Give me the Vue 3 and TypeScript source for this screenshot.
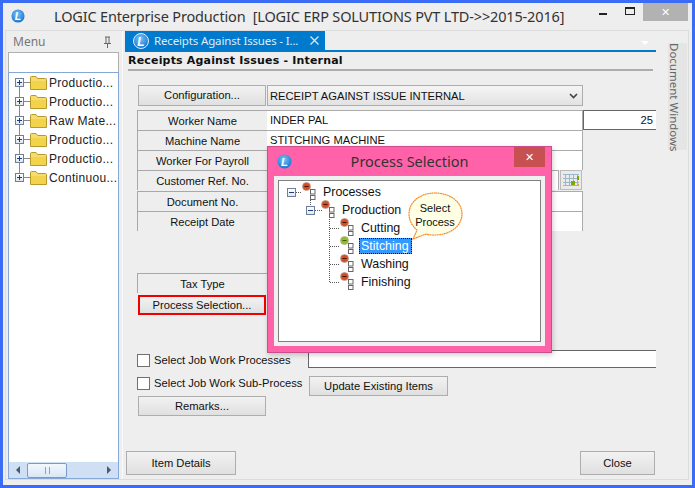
<script setup lang="ts">
const menuItems: string[] = ['Productio...', 'Productio...', 'Raw  Mate...', 'Productio...', 'Productio...', 'Continuou...']
const formRows = [
  { label: 'Worker Name', value: 'INDER PAL', extra: '25', cls: '' },
  { label: 'Machine Name', value: 'STITCHING MACHINE', extra: '', cls: '' },
  { label: 'Worker For Payroll', value: '', extra: '', cls: '' },
  { label: 'Customer Ref. No.', value: '', extra: '', cls: 'has-cal' },
  { label: 'Document No.', value: '', extra: '', cls: 'shift' },
  { label: 'Receipt Date', value: '', extra: '', cls: '' },
]
const processes = [
  { name: 'Processes', depth: 0, active: false, selected: false, toggle: true },
  { name: 'Production', depth: 1, active: false, selected: false, toggle: true },
  { name: 'Cutting', depth: 2, active: false, selected: false, toggle: false },
  { name: 'Stitching', depth: 2, active: true, selected: true, toggle: false },
  { name: 'Washing', depth: 2, active: false, selected: false, toggle: false },
  { name: 'Finishing', depth: 2, active: false, selected: false, toggle: false },
]
</script>

<template>
  <div class="window">
    <header class="titlebar">
      <svg class="logo" width="14" height="14" viewBox="0 0 16 16">
        <defs>
          <radialGradient id="ball" cx="45%" cy="35%" r="70%">
            <stop offset="0" stop-color="#7cc4f5" />
            <stop offset="1" stop-color="#0f6fd0" />
          </radialGradient>
        </defs>
        <circle cx="8" cy="8" r="7.500" fill="url(#ball)" />
        <text x="8" y="12.500" text-anchor="middle" class="logo-l">L</text>
      </svg>
      <span class="app-title">LOGIC Enterprise Production&nbsp;&nbsp;[LOGIC ERP SOLUTIONS PVT LTD-&gt;&gt;2015-2016]</span>
      <div class="win-btns">
        <span class="min"></span>
        <span class="max"></span>
        <span class="cls">✕</span>
      </div>
    </header>

    <div class="frame">
      <aside class="sidebar">
        <div class="menu-head">
          <span class="menu-title">Menu</span>
          <span class="gripper"></span>
          <svg class="pin" width="9" height="12" viewBox="0 0 9 12">
            <path d="M2 1h5M3 1v6M6 1v6M1 7.500h7M4.500 7.500V12" stroke="#666" fill="none" />
          </svg>
        </div>
        <div class="search"></div>
        <div class="tree-box">
          <ul class="menu-tree">
            <li v-for="(item, i) in menuItems" :key="i" class="menu-row">
              <span class="exp plus"></span>
              <svg width="17" height="14" viewBox="0 0 17 14" class="folder">
                <path d="M0.500 3V1.500Q0.500 0.500 1.500 0.500H6L7.500 2.500H15.500Q16.500 2.500 16.500 3.500V13.500H0.500Z" fill="#f6dc6c" stroke="#b89a2c" />
                <path d="M1 5H16V13H1Z" fill="#f3d24c" />
              </svg>
              <span class="menu-text">{{ item }}</span>
            </li>
          </ul>
          <div class="hscroll">
            <span class="arrow left"></span>
            <span class="thumb"><i></i></span>
            <span class="arrow right"></span>
          </div>
        </div>
      </aside>

      <div class="splitter"></div>

      <main class="main">
        <div class="tabstrip">
          <div class="tab">
            <svg width="16" height="16" viewBox="0 0 16 16">
              <circle cx="8" cy="8" r="7.500" fill="url(#ball)" stroke="#dceeff" />
              <text x="8" y="12.500" text-anchor="middle" class="logo-l">L</text>
            </svg>
            <span class="tab-text">Receipts Against Issues - I...</span>
            <svg class="tab-x" width="9" height="9" viewBox="0 0 9 9">
              <path d="M0.500 0.500L8.500 8.500M8.500 0.500L0.500 8.500" stroke="#d5e8f7" stroke-width="1.300" />
            </svg>
          </div>
          <span class="tab-menu"></span>
        </div>

        <h1 class="heading">Receipts Against Issues - Internal</h1>
        <div class="rule"></div>

        <section class="form">
          <div class="config-row">
            <button class="btn config-btn">Configuration...</button>
            <div class="select">
              <span>RECEIPT AGAINST ISSUE INTERNAL</span>
              <svg width="9" height="6" viewBox="0 0 9 6"><path d="M1 1l3.500 3.500L8 1" stroke="#444" stroke-width="1.600" fill="none" /></svg>
            </div>
          </div>

          <div v-for="row in formRows" :key="row.label" class="row" :class="row.cls">
            <div class="lbl">{{ row.label }}</div>
            <div class="field-wrap">
              <div class="field">{{ row.value }}</div>
              <svg v-if="row.cls === 'has-cal'" class="cal" width="22" height="20" viewBox="0 0 22 20">
                <rect x="0.500" y="0.500" width="21" height="19" fill="#eaeaea" stroke="#bbb" />
                <path d="M3 4.500H19M3 8.500H19M3 12.500H19M3 15.500H19M5.500 4V16M9.500 4V16M13.500 4V16M17.500 4V16" stroke="#9db7c9" fill="none" />
                <rect x="11" y="11" width="4" height="4" fill="#7fa800" />
                <rect x="17" y="6" width="2" height="4" fill="#7fa800" />
                <rect x="17" y="14" width="2" height="2" fill="#e8a33a" />
              </svg>
            </div>
            <div v-if="row.extra" class="extra">{{ row.extra }}</div>
          </div>

          <div class="lbl tax">Tax Type</div>
          <button class="btn process-btn">Process Selection...</button>

          <div class="check-row first">
            <label class="check"><span class="box"></span>Select Job Work Processes</label>
            <div class="job-input"></div>
          </div>
          <div class="check-row second">
            <label class="check"><span class="box"></span>Select Job Work Sub-Process</label>
            <button class="btn update-btn">Update Existing Items</button>
          </div>
          <button class="btn remarks-btn">Remarks...</button>
        </section>

        <footer class="footer">
          <button class="btn foot-btn item">Item Details</button>
          <button class="btn foot-btn close">Close</button>
        </footer>

        <div class="modal">
          <div class="modal-head">
            <svg class="modal-logo" width="15" height="15" viewBox="0 0 16 16">
              <circle cx="8" cy="8" r="7.500" fill="url(#ball)" />
              <text x="8" y="12.500" text-anchor="middle" class="logo-l">L</text>
            </svg>
            <span class="modal-title">Process Selection</span>
            <span class="modal-close">✕</span>
          </div>
          <div class="modal-body">
            <div class="proc-panel">
              <svg class="connectors" width="120" height="120" viewBox="0 0 120 120">
                <g stroke="#555" stroke-dasharray="1 1" fill="none">
                  <path d="M17 11.500H23M31.500 19V25M36 29.500H43" />
                  <path d="M50.500 32V101.500M51 47.500H61M51 65.500H61M51 83.500H61M51 101.500H61" />
                </g>
              </svg>
              <ul class="proc-tree">
                <li v-for="p in processes" :key="p.name" class="proc-row" :class="'d' + p.depth">
                  <span v-if="p.toggle" class="exp minus"></span>
                  <svg class="node" width="15" height="18" viewBox="0 0 15 18">
                    <circle cx="4.500" cy="4.500" r="4" :fill="p.active ? '#8fbf2a' : '#cf4f26'" stroke="#b9a59c" stroke-width="0.700" />
                    <path d="M2.500 4.500H6.500" :stroke="p.active ? '#3c5a00' : '#4a1000'" />
                    <rect x="8.500" y="7.500" width="4.500" height="4.500" fill="#fff" stroke="#666" />
                    <rect x="8.500" y="13.500" width="4.500" height="4" fill="#fff" stroke="#666" />
                  </svg>
                  <span class="proc-name" :class="{ sel: p.selected }">{{ p.name }}</span>
                </li>
              </ul>
              <div class="bubble">
                <svg width="60" height="52" viewBox="0 0 60 52">
                  <path d="M27 1C42 1 54 10 54 22C54 34 42 43 27 43C24 43 21 43 18 42L5 47L9 38C4 34 1 28 1 22C1 10 12 1 27 1Z" fill="#ffffe6" stroke="#f5831f" stroke-width="1.100" stroke-dasharray="2 0.400" />
                </svg>
                <span class="bubble-text">Select<br />Process</span>
              </div>
            </div>
          </div>
        </div>
      </main>

      <aside class="dock">
        <div class="dock-tab"><span>Document Windows</span></div>
      </aside>
    </div>
  </div>
</template>

<style>
html, body { margin: 0; padding: 0; background: #eee; }
</style>

<style scoped>
.window {
  width: 695px; height: 488px; box-sizing: border-box;
  border: 3px solid #3b6cf5; background: #eee;
  display: flex; flex-direction: column; overflow: hidden;
  font-family: "Liberation Sans", Arial, sans-serif; font-size: 11.200px; color: #111;
}
.titlebar { height: 27px; display: flex; align-items: flex-start; flex: none; position: relative; }
.logo { margin: 6px 0 0 8px; flex: none; }
.logo-l { font: italic bold 12px "Liberation Sans", sans-serif; fill: #fff; }
.app-title {
  margin: 1px 0 0 29px; font-family: "Noto Sans", sans-serif; font-size: 14.500px; line-height: 24px;
  color: #333; white-space: pre; letter-spacing: -0.160px;
}
.win-btns { position: absolute; right: 4px; top: 0; display: flex; align-items: flex-start; }
.min { width: 8px; height: 2px; background: #222; margin: 10px 0 0 0; }
.max { width: 10px; height: 8px; box-sizing: border-box; border: 1px solid #222; border-top-width: 2px; margin: 4px 0 0 18px; }
.cls {
  width: 45px; height: 18px; background: #b2b2b2; color: #fff; margin-left: 8px;
  display: flex; align-items: center; justify-content: center; font-size: 11px; font-weight: bold; font-family: "DejaVu Sans", sans-serif;
}
.frame {
  flex: 1; min-height: 0; margin: 0 3px 5px 2px; border: 1px solid #dcdcdc;
  display: flex; background: #eee;
}
.sidebar { width: 111px; margin-left: 2px; display: flex; flex-direction: column; flex: none; }
.menu-head { height: 21px; display: flex; align-items: center; box-sizing: border-box; padding: 0 7px 0 5px; flex: none; }
.menu-title { color: #777; font-family: "Noto Sans", sans-serif; font-size: 12px; }
.gripper {
  width: 34px; height: 5px; margin-left: 3px; flex: none;
  background-image: radial-gradient(#b5b5b5 0.600px, transparent 0.700px); background-size: 2px 2px;
}
.pin { margin-left: auto; }
.search { height: 19px; flex: none; background: #fff; border: 1px solid #b0b0b0; border-bottom: 0; box-sizing: content-box; width: 109px; }
.tree-box {
  flex: 1; min-height: 0; background: #fff; border: 1px solid #84a9d9; display: flex; flex-direction: column; justify-content: space-between;
  box-sizing: border-box;
}
.menu-tree { list-style: none; margin: 0; padding: 0 0 0 6px; }
.menu-row { height: 19px; display: flex; align-items: center; position: relative; font-size: 12px; }
.exp {
  width: 9px; height: 9px; box-sizing: border-box; border: 1px solid #6f7f99; background: linear-gradient(#fff, #dfe6ee);
  flex: none; position: relative;
}
.exp::before { content: ""; position: absolute; left: 1px; top: 3px; width: 5px; height: 1px; background: #1c3f7c; }
.plus::after { content: ""; position: absolute; left: 3px; top: 1px; width: 1px; height: 5px; background: #1c3f7c; }
.menu-row::before { content: ""; position: absolute; left: 9px; top: 9px; width: 6px; border-top: 1px solid #888; }
.menu-row:not(:last-child)::after { content: ""; position: absolute; left: 4px; top: 14px; height: 10px; border-left: 1px solid #888; }
.folder { margin-left: 6px; flex: none; }
.menu-text { margin-left: 2px; white-space: nowrap; letter-spacing: 0.300px; color: #222; }
.hscroll { height: 16px; background: #cfdff4; display: flex; align-items: center; flex: none; position: relative; }
.arrow { width: 0; height: 0; border-top: 4px solid transparent; border-bottom: 4px solid transparent; position: absolute; }
.arrow.left { border-right: 4px solid #4c5a70; left: 7px; }
.arrow.right { border-left: 4px solid #4c5a70; right: 7px; }
.thumb {
  position: absolute; left: 18px; width: 40px; height: 15px; box-sizing: border-box; border: 1px solid #7a9bc6; border-radius: 2px;
  background: linear-gradient(#f3f8fe, #d9e6f6); display: flex; align-items: center; justify-content: center;
}
.thumb i { width: 5px; height: 7px; border-left: 1px solid #8aa; border-right: 1px solid #8aa; position: relative; box-sizing: border-box; }
.splitter { width: 6px; flex: none; position: relative; }
.splitter::after { content: ""; position: absolute; left: 3px; top: 0; bottom: 0; width: 1px; background: #fafafa; }
.main { width: 531px; flex: none; position: relative; display: flex; flex-direction: column; }
.tabstrip { height: 21px; border-bottom: 2px solid #007acc; box-sizing: border-box; position: relative; flex: none; }
.tab {
  width: 200px; height: 19px; background: #007acc; color: #dcecf8; display: flex; align-items: center; box-sizing: border-box; padding-left: 8px;
}
.tab-text { margin-left: 5px; font-family: "Noto Sans", sans-serif; font-size: 11.500px; letter-spacing: -0.150px; white-space: nowrap; width: 156px; }
.tab-x { flex: none; }
.tab-menu {
  position: absolute; right: 7px; top: 10px; width: 0; height: 0;
  border-left: 4px solid transparent; border-right: 4px solid transparent; border-top: 4px solid #fff;
}
.heading {
  margin: 0 0 0 3px; height: 17px; font: bold 11px/18px "DejaVu Sans", sans-serif; letter-spacing: 0.180px; color: #111; white-space: nowrap;
}
.rule { height: 2px; background: #adadad; margin: 0 3px; flex: none; }
.form { margin-left: 12px; display: flex; flex-direction: column; align-items: flex-start; }
.btn {
  box-sizing: border-box; border: 1px solid #adadad; background: linear-gradient(#f2f2f2, #e0e0e0); color: #111;
  font: 11.200px "Liberation Sans", Arial, sans-serif; padding: 0; border-radius: 0;
}
.config-row { display: flex; margin-top: 14px; }
.config-btn { width: 128px; height: 21px; margin-left: 1px; padding-bottom: 2px; }
.select {
  width: 316px; height: 21px; box-sizing: border-box; border: 1px solid #adadad; margin-left: 1px;
  background: linear-gradient(#f5f5f5, #e2e2e2); display: flex; align-items: center; justify-content: space-between; padding: 1px 4px 0 2px;
}
.row { display: flex; height: 20px; }
.config-row + .row { margin-top: 4px; }
.row.shift { margin-top: 1px; }
.lbl {
  width: 130px; height: 20px; box-sizing: border-box; border-top: 1px solid #a8a8a8; border-left: 1px solid #a8a8a8;
  display: flex; align-items: center; justify-content: center; flex: none;
}
.field-wrap { width: 316px; display: flex; flex: none; }
.field {
  flex: 1; height: 20px; box-sizing: border-box; background: #fff; border: 1px solid #ababab; border-left: 0; border-bottom: 0; padding: 1px 0 0 3px;
  line-height: 17px;
}
.has-cal .field { flex: none; width: 292px; }
.cal { flex: none; margin-left: 1px; }
.extra {
  width: 73px; height: 20px; box-sizing: border-box; background: #fff; border: 1px solid #666; border-right: 0; text-align: right; padding-right: 3px; line-height: 18px;
}
.tax { margin-top: 42px; }
.process-btn { width: 128px; height: 20px; margin: 2px 0 0 1px; border: 2px solid #f00000; }
.check-row { display: flex; align-items: flex-start; }
.check-row.first { margin-top: 35px; height: 18px; }
.check-row.second { margin-top: 8px; height: 20px; }
.check { display: flex; align-items: flex-start; white-space: nowrap; width: 171px; height: 18px; }
.box { width: 13px; height: 13px; box-sizing: border-box; border: 1px solid #707070; background: #fff; margin-right: 4px; flex: none; }
.first .check { line-height: 20px; }
.first .box { margin-top: 4px; }
.second .check { line-height: 14px; }
.second .box { margin-top: 1px; }
.job-input { width: 348px; height: 18px; box-sizing: border-box; background: #fff; border: 1px solid #666; border-right: 0; }
.update-btn { width: 139px; height: 20px; margin-left: 1px; }
.remarks-btn { width: 128px; height: 20px; margin-left: 1px; }
.footer { display: flex; justify-content: space-between; margin-top: 35px; padding: 0 1px; }
.foot-btn { height: 24px; }
.item { width: 110px; }
.close { width: 75px; }
.modal {
  position: absolute; left: 142px; top: 115px; width: 285px; height: 207px; box-sizing: border-box;
  background: #ff62a9; border: 1px solid #cc4d8b; box-shadow: 1px 2px 5px rgba(0,0,0,0.200); display: flex; flex-direction: column;
}
.modal-head { height: 29px; flex: none; position: relative; display: flex; justify-content: center; align-items: flex-start; }
.modal-logo { position: absolute; left: 9px; top: 7px; }
.modal-title { font-family: "Noto Sans", sans-serif; font-size: 14.500px; color: #333; line-height: 29px; }
.modal-close {
  position: absolute; right: 6px; top: 0; width: 31px; height: 20px; background: #c75050; color: #fff;
  display: flex; align-items: center; justify-content: center; font: bold 11px "DejaVu Sans", sans-serif;
}
.modal-body { flex: 1; min-height: 0; margin: 0 6px 6px 6px; background: #f0f0f0; padding: 4px; box-sizing: border-box; display: flex; }
.proc-panel { flex: 1; background: #fff; border: 1px solid #808080; position: relative; }
.connectors { position: absolute; left: 0; top: 0; }
.proc-tree { list-style: none; margin: 0; padding: 2px 0 0 0; font-size: 12.400px; color: #111; }
.proc-row { height: 18px; display: flex; align-items: center; position: relative; }
.proc-row.d0 { padding-left: 8px; }
.proc-row.d1 { padding-left: 27px; }
.proc-row.d2 { padding-left: 61px; }
.proc-row .exp { margin-right: 6px; }
.node { flex: none; margin-top: -2px; }
.proc-name { margin: -1px 0 0 4px; padding: 0 2px 0 1px; line-height: 14px; white-space: nowrap; border: 1px dotted transparent; }
.proc-name.sel { background: #3399ff; color: #fff; border-color: #111; }
.bubble { position: absolute; left: 129px; top: 11px; width: 60px; height: 52px; }
.bubble svg { display: block; }
.bubble-text { position: absolute; left: 0; top: 9px; width: 54px; text-align: center; font-size: 11px; line-height: 14px; color: #111; }
.dock { flex: 1; min-width: 0; position: relative; }
.dock-tab { position: absolute; top: 12px; left: 12px; width: 19px; height: 107px; background: #e5e5e5; }
.dock-tab span {
  position: absolute; left: -1px; top: 0; writing-mode: vertical-rl; font-family: "Noto Sans", sans-serif; font-size: 11.500px; color: #666; white-space: nowrap; line-height: 14px;
}
</style>
